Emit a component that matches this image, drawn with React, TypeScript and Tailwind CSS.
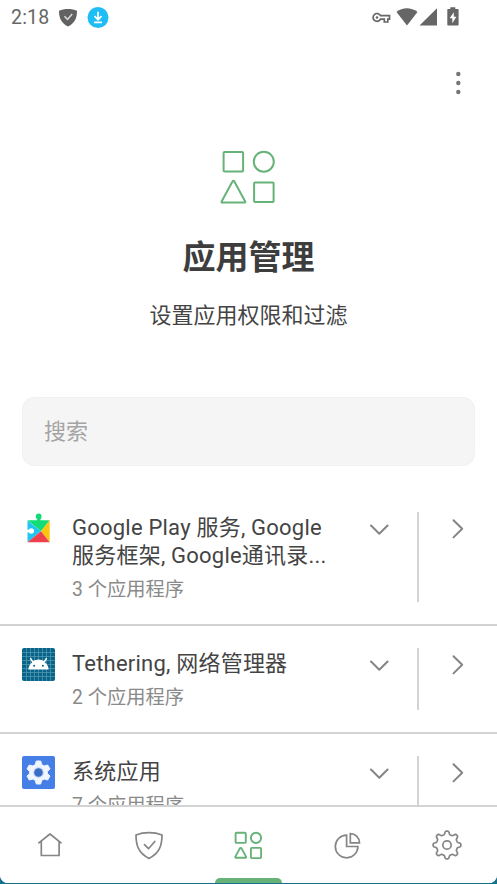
import React, { useState } from 'react';

interface AppGroup {
  id: string;
  name: string;
  count: number;
  icon: React.FC;
}

interface IconProps {
  className?: string;
}

const PlayServicesIcon: React.FC = () => (
  <svg width="33" height="33" viewBox="0 0 33 33">
    <path d="M5.500 8.500 19 19.300 5.500 30.300z" fill="#22c4f4" />
    <path d="M5.500 8.300h22.200L19 19.300z" fill="#12dc77" />
    <path d="M27.700 8.300v21.900L19 19.300z" fill="#fcc60f" />
    <path d="M5.500 30.300 19 19.300l8.700 11z" fill="#ee404d" />
    <circle cx="16.700" cy="4.500" r="2.900" fill="#12dc77" />
    <path d="M15 5.500h3.400v4H15z" fill="#12dc77" />
    <circle cx="9.300" cy="19" r="2.700" fill="#fff" />
    <path d="M5 17.800h3.500v2.500H5z" fill="#fff" />
  </svg>
);

const TetheringIcon: React.FC = () => (
  <svg width="33" height="33" viewBox="0 0 33 33">
    <rect width="33" height="33" rx="2" fill="#09648a" />
    <path
      d="M4.500 0v33M8.500 0v33M12.500 0v33M16.500 0v33M20.500 0v33M24.500 0v33M28.500 0v33M0 4.500h33M0 8.500h33M0 12.500h33M0 16.500h33M0 20.500h33M0 24.500h33M0 28.500h33"
      stroke="#4f97ad"
      strokeWidth="0.8"
    />
    <path d="M6.300 21.500c.4-3.600 2-6.200 4.700-7.600h11c2.700 1.400 4.300 4 4.700 7.600z" fill="#fff" />
    <path d="M11 13.900c3.200-1.900 7.800-1.900 11 0M8.700 10.700l2.600 4.200M24.300 10.700l-2.600 4.200" stroke="#fff" strokeWidth="1.600" fill="#fff" strokeLinecap="round" />
    <circle cx="12.100" cy="17.700" r="1" fill="#09648a" />
    <circle cx="20.900" cy="17.700" r="1" fill="#09648a" />
  </svg>
);

const SystemIcon: React.FC = () => (
  <svg width="33" height="33" viewBox="0 0 33 33">
    <rect width="33" height="33" rx="2" fill="#467ee8" />
    <path
      d="M14.300 5h4.400l1 3.600 2.400 1.400 3.600-1 2.300 3.900-2.600 2.600v2l2.600 2.600-2.300 3.900-3.600-1-2.400 1.400-1 3.600h-4.400l-1-3.600-2.400-1.400-3.600 1L5 20.100l2.600-2.600v-2L5 12.900 7.300 9l3.600 1 2.400-1.400z"
      fill="#eef5ff"
      stroke="#eef5ff"
      strokeLinejoin="round"
    />
    <circle cx="16.500" cy="16.500" r="5.400" fill="#c5d9f8" />
    <circle cx="16.500" cy="16.500" r="4.300" fill="#396dc4" />
  </svg>
);

const GROUPS: AppGroup[] = [
  { id: 'play', name: 'Google Play 服务, Google 服务框架, Google通讯录...', count: 3, icon: PlayServicesIcon },
  { id: 'tethering', name: 'Tethering, 网络管理器', count: 2, icon: TetheringIcon },
  { id: 'system', name: '系统应用', count: 7, icon: SystemIcon },
];

const HomeIcon: React.FC<IconProps> = ({ className }) => (
  <svg width="32" height="32" viewBox="0 0 32 32" className={className} fill="none" stroke="currentColor" strokeWidth="1.700" strokeLinejoin="round" strokeLinecap="round">
    <path d="M4.800 13.800 16 5l11 8.800M7.300 12.500v14h17.800v-14" />
  </svg>
);

const ShieldIcon: React.FC<IconProps> = ({ className }) => (
  <svg width="32" height="32" viewBox="0 0 32 32" className={className} fill="none" stroke="currentColor" strokeWidth="1.700" strokeLinejoin="round" strokeLinecap="round">
    <path d="M16 3.700c4.600 0 9 .7 13 2.300 0 10.500-2.500 18-13 23.400C5.500 24 3 16.500 3 6c4-1.600 8.400-2.300 13-2.300z" />
    <path d="m11.500 15.700 4 4 6.300-7.200" />
  </svg>
);

const AppsIcon: React.FC<IconProps> = ({ className }) => (
  <svg width="32" height="32" viewBox="0 0 32 32" className={className} fill="none" stroke="currentColor" strokeWidth="1.900" strokeLinejoin="round">
    <rect x="3.600" y="3.700" width="10.200" height="10.200" rx="1" />
    <circle cx="24" cy="8.900" r="5.100" />
    <path d="M7.700 19.600a1.200 1.200 0 0 1 2 0l4.300 8a.8.800 0 0 1-.7 1.200H4.100a.8.800 0 0 1-.7-1.200z" />
    <rect x="18.900" y="18.900" width="10.200" height="10.200" rx="1" />
  </svg>
);

const StatsIcon: React.FC<IconProps> = ({ className }) => (
  <svg width="32" height="32" viewBox="0.700 0 32 32" className={className} fill="none" stroke="currentColor" strokeWidth="1.700" strokeLinejoin="miter">
    <path d="M15.300 6.200A11.300 11.300 0 1 0 26.600 17.500H15.300z" />
    <path d="M19 4.600v9.200h9.200A9.200 9.200 0 0 0 19 4.600z" />
  </svg>
);

// Eight soft teeth around the centre
const gearPath = Array.from({ length: 160 }, (_, i) => {
  const a = (i / 160) * Math.PI * 2;
  const r = 12.3 + 1.7 * Math.tanh(2 * Math.cos(8 * a) - 0.3);
  return `${i === 0 ? 'M' : 'L'}${(16 + r * Math.cos(a)).toFixed(2)} ${(16 + r * Math.sin(a)).toFixed(2)}`;
}).join('') + 'z';

const SettingsIcon: React.FC<IconProps> = ({ className }) => (
  <svg width="32" height="32" viewBox="0 0 32 32" className={className} fill="none" stroke="currentColor" strokeWidth="1.700" strokeLinejoin="round">
    <path d={gearPath} />
    <circle cx="16" cy="16" r="4.200" />
  </svg>
);

const TABS = [
  { id: 'home', icon: HomeIcon },
  { id: 'protection', icon: ShieldIcon },
  { id: 'apps', icon: AppsIcon },
  { id: 'stats', icon: StatsIcon },
  { id: 'settings', icon: SettingsIcon },
];

const StatusBar: React.FC = () => (
  <div className="flex h-[35px] shrink-0 items-center justify-between pl-[11px] pr-[36px] text-[#666]">
    <div className="flex items-center">
      <span className="w-[47px] pt-[1px] text-[19.500px] leading-[34px] tracking-[0.200px]">2:18</span>
      <svg width="20" height="20" viewBox="0 0 20 20">
        <path d="M10 1c3.300 0 6.300.5 9 1.700 0 7-2 12.300-9 15.800C3 15 1 9.700 1 2.700 3.700 1.500 6.700 1 10 1z" fill="#626262" />
        <path d="m6.500 8.200 3 3.200 4.700-5.500" fill="none" stroke="#ddd" strokeWidth="1.500" />
      </svg>
      <svg width="22" height="22" viewBox="0 0 22 22" className="ml-[9px]">
        <circle cx="11" cy="10.500" r="10.500" fill="#1fbdf5" />
        <path d="M11 4.700v8M7.500 9.200l3.500 3.500 3.500-3.500M7 15.400h8" fill="none" stroke="#fff" strokeWidth="1.700" />
      </svg>
    </div>
    <svg width="90" height="22" viewBox="0 0 90 22" fill="#666">
      <path d="M9.500 8.700H18.500v3.400h-1.700v2.900h-3.500v-2.900H9.500a3.900 3.900 0 1 1 0-3.400z" fill="none" stroke="#666" strokeWidth="1.700" />
      <circle cx="6" cy="10.500" r="1.300" />
      <path d="M25.500 4.900C31.500-.1 40 -.1 46.500 4.900L36 18.400z" />
      <path d="M66 1.200v17.200H48.500z" />
      <path d="M79.300 2V.3h5V2h2.300c.6 0 1 .4 1 1v14.600c0 .6-.4 1-1 1h-9.300c-.6 0-1-.4-1-1V3c0-.6.400-1 1-1z" />
      <path d="M82.800 5.200v4.500h2.600l-4.100 6.500v-5h-2.600z" fill="#fff" />
    </svg>
  </div>
);

const GroupRow: React.FC<{ group: AppGroup }> = ({ group }) => (
  <li className="flex border-b-2 border-[#d3d3d3] py-[22px] pl-[22px]">
    <div className="h-[33px] w-[33px] shrink-0">
      <group.icon />
    </div>
    <div className="ml-[17px] w-[266px] pt-[2px]">
      <h2 className="text-[22px] leading-[28px] tracking-[0.220px] text-[#444]">{group.name}</h2>
      <p className="mt-[8px] text-[19.300px] leading-[24px] text-[#8a8a8a]">{group.count} 个应用程序</p>
    </div>
    <button type="button" className="flex w-[81px] items-start justify-center border-r-2 border-[#d3d3d3] pt-[7px] text-[#858585]">
      <svg width="22" height="22" viewBox="0 0 22 22" fill="none" stroke="currentColor" strokeWidth="2" strokeLinecap="round" strokeLinejoin="round">
        <path d="m4 6.500 8.300 8.300 8.300-8.300" />
      </svg>
    </button>
    <button type="button" className="flex flex-1 items-start justify-center pt-[6px] text-[#858585]">
      <svg width="22" height="22" viewBox="0 0 22 22" fill="none" stroke="currentColor" strokeWidth="2" strokeLinecap="round" strokeLinejoin="round">
        <path d="m6.500 2.200 8.700 8.600-8.700 8.600" />
      </svg>
    </button>
  </li>
);

const App: React.FC = () => {
  const [search, setSearch] = useState('');
  const [activeTab, setActiveTab] = useState('apps');

  const visible = GROUPS.filter(g => g.name.toLowerCase().includes(search.toLowerCase()));

  return (
    <div className="h-[884px] w-[497px] overflow-hidden bg-[#17708a] font-[Roboto,'Noto_Sans_CJK_SC',sans-serif]">
      <div className="flex h-[883px] flex-col overflow-hidden rounded-b-[8px] bg-white">
        <StatusBar />

        <div className="flex h-[97px] shrink-0 justify-end pr-[28px] pt-[34px]">
          <button type="button" className="h-[28px] w-[22px]">
            <svg width="22" height="28" viewBox="0 0 22 28" fill="#757575">
              <circle cx="11.300" cy="5" r="2.200" />
              <circle cx="11.300" cy="14" r="2.200" />
              <circle cx="11.300" cy="23" r="2.200" />
            </svg>
          </button>
        </div>

        <header className="flex shrink-0 flex-col items-center">
          <svg width="66" height="66" viewBox="0.700 0 66 66" fill="none" stroke="#67b279" strokeWidth="2" strokeLinejoin="round" className="mt-[12px]">
            <rect x="8.300" y="8" width="19.500" height="19.500" rx="1" />
            <circle cx="48.500" cy="17.700" r="10" />
            <path d="M17.300 37.300a.9.900 0 0 1 1.600 0l11 20.100a.8.800 0 0 1-.7 1.200H7a.8.800 0 0 1-.7-1.200z" />
            <rect x="38.800" y="38.400" width="19.500" height="19.500" rx="1" />
          </svg>
          <h1 className="mt-[26px] text-[33px] font-bold leading-[44px] text-[#3d3d3d]">应用管理</h1>
          <p className="mt-[21px] text-[22px] leading-[30px] text-[#444]">设置应用权限和过滤</p>
        </header>

        <div className="mt-[66px] shrink-0 px-[22px]">
          <input
            type="text"
            value={search}
            onChange={(e) => setSearch(e.target.value)}
            placeholder="搜索"
            className="block h-[69px] w-full rounded-[12px] border border-[#f1f1f1] bg-[#f5f5f5] px-[21px] text-[22px] text-[#3d3d3d] placeholder:text-[#a4a4a4] focus:outline-none"
          />
        </div>

        <ul className="mt-[24px] min-h-0 flex-1 overflow-hidden">
          {visible.map(g => (
            <GroupRow key={g.id} group={g} />
          ))}
        </ul>

        <nav className="grid h-[78px] shrink-0 grid-cols-5 border-t-2 border-[#d3d3d3] bg-white">
          {TABS.map(tab => (
            <button
              key={tab.id}
              type="button"
              onClick={() => setActiveTab(tab.id)}
              className={`flex flex-col items-center justify-between pt-[22px] ${activeTab === tab.id ? 'text-[#67b279]' : 'text-[#858585]'}`}
            >
              <tab.icon />
              {activeTab === tab.id && <span className="h-[5px] w-[67px] rounded-t-[5px] bg-[#67b279]" />}
            </button>
          ))}
        </nav>
      </div>
    </div>
  );
};

export default App;
